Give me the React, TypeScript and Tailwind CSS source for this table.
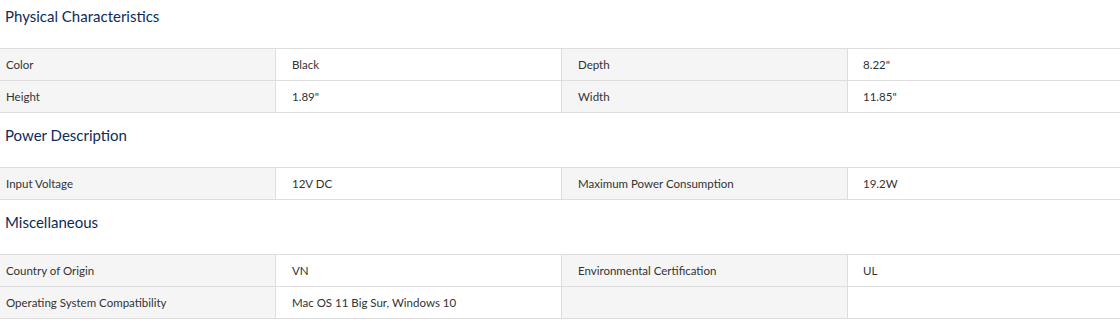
import React from 'react';

type Row = [string, string, string, string];

const sections: { title: string; rows: Row[] }[] = [
  {
    title: 'Physical Characteristics',
    rows: [
      ['Color', 'Black', 'Depth', '8.22"'],
      ['Height', '1.89"', 'Width', '11.85"'],
    ],
  },
  {
    title: 'Power Description',
    rows: [['Input Voltage', '12V DC', 'Maximum Power Consumption', '19.2W']],
  },
  {
    title: 'Miscellaneous',
    rows: [
      ['Country of Origin', 'VN', 'Environmental Certification', 'UL'],
      ['Operating System Compatibility', 'Mac OS 11 Big Sur, Windows 10', '', ''],
    ],
  },
];

function SpecRow({ row }: { row: Row }) {
  return (
    <div className="flex h-[32px] border-b border-[#dddddd] text-[11.5px] text-[#333333]">
      <div className="w-[276px] shrink-0 flex items-center pl-[6px] bg-[#f5f5f5] border-r border-[#dddddd]">{row[0]}</div>
      <div className="w-[286px] shrink-0 flex items-center pl-[16px] border-r border-[#dddddd]">{row[1]}</div>
      <div className="w-[286px] shrink-0 flex items-center pl-[16px] bg-[#f5f5f5] border-r border-[#dddddd]">{row[2]}</div>
      <div className="flex-1 flex items-center pl-[15px]">{row[3]}</div>
    </div>
  );
}

export default function App() {
  return (
    <div className="w-[1120px] bg-white mt-[-6px]" style={{ fontFamily: 'Lato, "Open Sans", sans-serif' }}>
      {sections.map((s) => (
        <div key={s.title}>
          <div className="h-[54px] pt-[13px] pl-[5px]">
            <h2 className="text-[15px] leading-[18px] text-[#0d2b5a]">{s.title}</h2>
          </div>
          <div className="border-t border-[#dddddd]">
            {s.rows.map((r, i) => (
              <SpecRow key={i} row={r} />
            ))}
          </div>
        </div>
      ))}
    </div>
  );
}
